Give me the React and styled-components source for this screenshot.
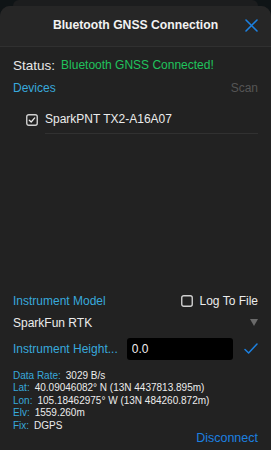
import React, { useState } from "react";
import styled, { createGlobalStyle } from "styled-components";

const GlobalStyle = createGlobalStyle`
  html, body {
    margin: 0;
    padding: 0;
    background: #0f1416;
  }
  body {
    font-family: "Liberation Sans", Arial, sans-serif;
    -webkit-font-smoothing: antialiased;
  }
`;

const Screen = styled.div`
  height: 450px;
  display: flex;
  flex-direction: column;
  overflow: hidden;
`;

const BackCard = styled.div`
  height: 6px;
  margin: 0 13px;
  background: #1c1d1e;
  border-radius: 10px 10px 0 0;
  flex-shrink: 0;
`;

const Sheet = styled.div`
  flex: 1;
  display: flex;
  flex-direction: column;
  background: #222222;
  border-radius: 10px 10px 0 0;
  overflow: hidden;
`;

const Header = styled.div`
  height: 40px;
  flex-shrink: 0;
  display: grid;
  grid-template-columns: 40px 1fr 40px;
  align-items: center;
  background: #262626;
  border-bottom: 1px solid #303030;
`;

const Title = styled.div`
  grid-column: 2;
  text-align: center;
  color: #f2f2f2;
  font-weight: bold;
  font-size: 12.2px;
  margin-top: -2px;
`;

const CloseButton = styled.button`
  justify-self: end;
  margin: -2px 13px 0 0;
  padding: 0;
  border: none;
  background: none;
  display: flex;
  cursor: pointer;
`;

const Body = styled.div`
  flex: 1;
  display: flex;
  flex-direction: column;
  padding: 0 13px;
`;

const StatusRow = styled.div`
  margin-top: 8px;
  height: 20px;
  display: flex;
  align-items: center;
  gap: 6px;
`;

const StatusLabel = styled.span`
  color: #e8e8e8;
  font-size: 13.5px;
`;

const StatusValue = styled.span`
  color: ${(p) => (p.$ok ? "#20c25d" : "#e05050")};
  font-size: 12px;
`;

const SectionRow = styled.div`
  display: flex;
  align-items: center;
  justify-content: space-between;
  height: 18px;
  margin-top: ${(p) => p.$top || 0}px;
`;

const SectionLabel = styled.span`
  color: #38a9dc;
  font-size: 12px;
`;

const Scan = styled.span`
  color: #555555;
  font-size: 12px;
`;

const DeviceRow = styled.div`
  margin: 8px 0 0 13px;
  display: flex;
  align-items: center;
  gap: 7px;
`;

const DeviceName = styled.div`
  flex: 1;
  color: #ececec;
  font-size: 12px;
  height: 20px;
  line-height: 20px;
  padding-bottom: 4px;
  border-bottom: 1px solid #313131;
  margin-top: 4px;
`;

const Spacer = styled.div`
  flex: 1;
`;

const LogToggle = styled.label`
  display: flex;
  align-items: center;
  gap: 7px;
  color: #ececec;
  font-size: 12px;
  cursor: pointer;
`;

const ModelRow = styled.div`
  margin-top: 4px;
  height: 18px;
  display: flex;
  align-items: center;
  justify-content: space-between;
  color: #ececec;
  font-size: 12px;
`;

const HeightRow = styled.div`
  margin-top: 6px;
  display: flex;
  align-items: center;
  gap: 9px;
`;

const HeightInput = styled.input`
  width: 106px;
  height: 22px;
  box-sizing: border-box;
  border: none;
  border-radius: 3px;
  background: #000000;
  color: #f0f0f0;
  font-family: "Liberation Sans", Arial, sans-serif;
  font-size: 12px;
  padding: 0 5px;
  outline: none;
`;

const ConfirmButton = styled.button`
  margin-left: auto;
  padding: 0;
  border: none;
  background: none;
  display: flex;
  cursor: pointer;
`;

const DataList = styled.div`
  margin-top: 10px;
  display: flex;
  flex-direction: column;
`;

const DataLine = styled.div`
  height: 12.5px;
  line-height: 12.5px;
  font-size: 10px;
  color: #ececec;
  white-space: nowrap;
`;

const DataKey = styled.span`
  color: #38a9dc;
  margin-right: 5px;
`;

const Footer = styled.div`
  display: flex;
  justify-content: flex-end;
  height: 12px;
  padding-bottom: 6px;
`;

const Disconnect = styled.button`
  padding: 0;
  border: none;
  background: none;
  color: #1c80e0;
  font-family: "Liberation Sans", Arial, sans-serif;
  font-size: 12.5px;
  line-height: 12px;
  cursor: pointer;
`;

const Box = ({ checked }) => (
  <svg width="12" height="12" viewBox="0 0 12 12">
    <rect x="0.75" y="0.75" width="10.5" height="10.5" rx="2" fill="none" stroke="#d0d0d0" strokeWidth="1.4" />
    {checked && (
      <path d="M3.3 6.2 L5.2 8 L8.7 3.9" fill="none" stroke="#e8e8e8" strokeWidth="1.3" strokeLinecap="round" strokeLinejoin="round" />
    )}
  </svg>
);

const data = [
  ["Data Rate:", "3029 B/s"],
  ["Lat:", "40.09046082° N (13N 4437813.895m)"],
  ["Lon:", "105.18462975° W (13N 484260.872m)"],
  ["Elv:", "1559.260m"],
  ["Fix:", "DGPS"],
];

export default function App() {
  const [logToFile, setLogToFile] = useState(false);
  const [height, setHeight] = useState("0.0");

  return (
    <>
      <GlobalStyle />
      <Screen>
        <BackCard />
        <Sheet>
          <Header>
            <Title>Bluetooth GNSS Connection</Title>
            <CloseButton aria-label="Close">
              <svg width="13" height="13" viewBox="0 0 13 13">
                <path d="M1 1 L12 12 M12 1 L1 12" stroke="#1c80e0" strokeWidth="1.6" strokeLinecap="round" />
              </svg>
            </CloseButton>
          </Header>
          <Body>
            <StatusRow>
              <StatusLabel>Status:</StatusLabel>
              <StatusValue $ok>Bluetooth GNSS Connected!</StatusValue>
            </StatusRow>
            <SectionRow $top={4}>
              <SectionLabel>Devices</SectionLabel>
              <Scan>Scan</Scan>
            </SectionRow>
            <DeviceRow>
              <Box checked />
              <DeviceName>SparkPNT TX2-A16A07</DeviceName>
            </DeviceRow>

            <Spacer />

            <SectionRow>
              <SectionLabel>Instrument Model</SectionLabel>
              <LogToggle onClick={() => setLogToFile(!logToFile)}>
                <Box checked={logToFile} />
                Log To File
              </LogToggle>
            </SectionRow>
            <ModelRow>
              <span>SparkFun RTK</span>
              <svg width="8" height="7" viewBox="0 0 8 7">
                <path d="M0 0 L8 0 L4 7 Z" fill="#6a6a6a" />
              </svg>
            </ModelRow>
            <HeightRow>
              <SectionLabel>Instrument Height...</SectionLabel>
              <HeightInput value={height} onChange={(e) => setHeight(e.target.value)} />
              <ConfirmButton aria-label="Apply">
                <svg width="14" height="11" viewBox="0 0 14 11">
                  <path d="M1 6.5 L4.6 10 L13 1" fill="none" stroke="#1c80e0" strokeWidth="1.5" strokeLinecap="round" strokeLinejoin="round" />
                </svg>
              </ConfirmButton>
            </HeightRow>
            <DataList>
              {data.map(([k, v]) => (
                <DataLine key={k}>
                  <DataKey>{k}</DataKey>
                  {v}
                </DataLine>
              ))}
            </DataList>
            <Footer>
              <Disconnect>Disconnect</Disconnect>
            </Footer>
          </Body>
        </Sheet>
      </Screen>
    </>
  );
}
